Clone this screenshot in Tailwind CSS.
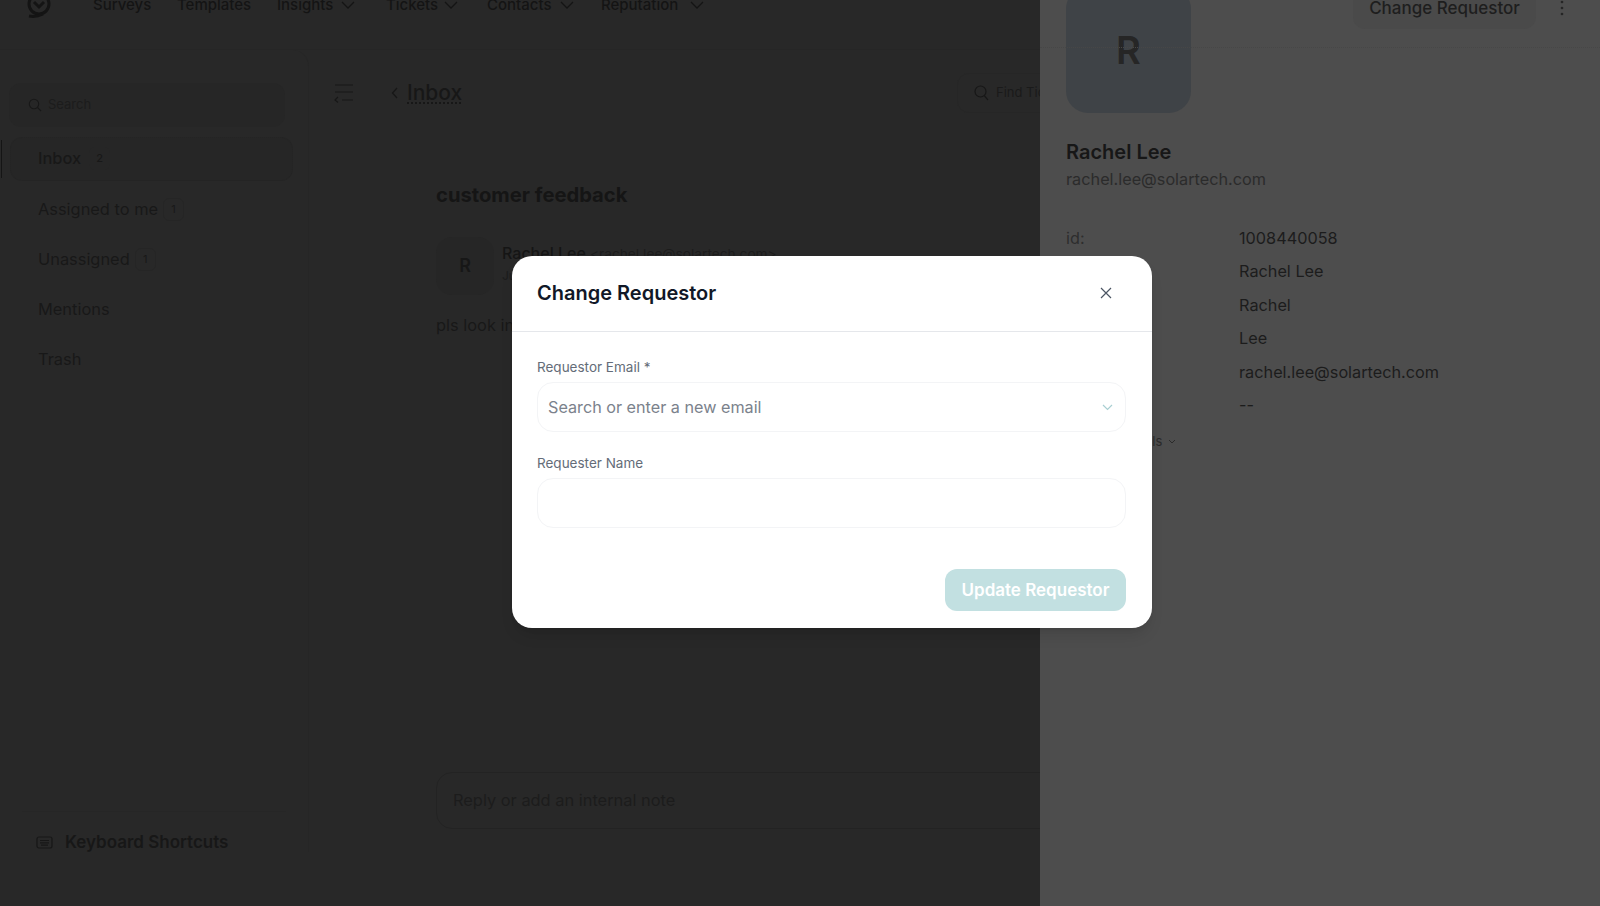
<!DOCTYPE html>
<html lang="en">
<head>
<meta charset="UTF-8" />
<meta name="viewport" content="width=device-width, initial-scale=1.0"/>
<title>Change Requestor</title>
<script src="https://cdn.jsdelivr.net/npm/@tailwindcss/browser@4"></script>
</head>
<body class="relative w-[1600px] h-[906px] overflow-hidden bg-[#282828] font-['Inter',sans-serif] text-[#171717]">

  <div class="flex h-full">
    <!-- Dimmed page -->
    <div class="w-[1040px] flex flex-col overflow-hidden">
      <!-- Navbar, scrolled partly out of view -->
      <nav class="h-[50px] shrink-0 flex items-start pl-[27px] border-b border-[#262626]">
        <svg class="-mt-[7px] mr-[42px]" width="24" height="25" viewBox="0 0 24 25" fill="none" stroke="#141414" stroke-width="3"><circle cx="12" cy="11" r="10"/><path d="M7 9l5 5 5-5M2 23c5 1 10 0 14-2" /></svg>
        <div class="flex text-[15px] font-medium leading-[14px] text-[#141414] -mt-[2px]">
          <span class="w-[84px]">Surveys</span>
          <span class="w-[100px]">Templates</span>
          <span class="w-[109px] flex items-center gap-[8px]">Insights <svg width="14" height="8" viewBox="0 0 14 8" fill="none" stroke="#141414" stroke-width="1.3"><path d="M1 1l6 6 6-6"/></svg></span>
          <span class="w-[101px] flex items-center gap-[6px]">Tickets <svg width="14" height="8" viewBox="0 0 14 8" fill="none" stroke="#141414" stroke-width="1.3"><path d="M1 1l6 6 6-6"/></svg></span>
          <span class="w-[114px] flex items-center gap-[8px]">Contacts <svg width="14" height="8" viewBox="0 0 14 8" fill="none" stroke="#141414" stroke-width="1.3"><path d="M1 1l6 6 6-6"/></svg></span>
          <span class="flex items-center gap-[12px]">Reputation <svg width="14" height="8" viewBox="0 0 14 8" fill="none" stroke="#141414" stroke-width="1.3"><path d="M1 1l6 6 6-6"/></svg></span>
        </div>
      </nav>

      <div class="flex flex-1 min-h-0">
        <!-- Sidebar -->
        <aside class="w-[309px] h-[802px] shrink-0 flex flex-col border-r border-[#262626] pt-[33px] rounded-tr-2xl">
          <div class="ml-[9px] w-[276px] h-11 rounded-xl bg-[#262626] flex items-center pl-[19px] gap-[6px] text-[13px] text-[#1c1c1c]">
            <svg width="14" height="14" viewBox="0 0 14 14" fill="none" stroke="#181818" stroke-width="1.1"><circle cx="6" cy="6" r="4.7"/><path d="M9.5 9.5L13 13"/></svg>
            Search
          </div>
          <ul class="mt-[10px] flex flex-col gap-[6px] text-[16.4px] text-[#181818]">
            <li class="relative h-11 ml-[10px] w-[283px] rounded-xl bg-[#262626] border border-dotted border-[#242424] flex items-center pl-[27px] pb-[2px] gap-2 font-medium">
              <span class="absolute -left-[10px] top-[2px] h-[38px] w-[1px] bg-[#151515]"></span>
              Inbox <span class="w-[21px] h-[23px] rounded-md bg-[#262626] flex items-center justify-center text-[11px]">2</span>
            </li>
            <li class="h-11 pl-[38px] flex items-center gap-[5px]">Assigned to me <span class="w-[21px] h-[23px] rounded-md border border-[#252525] flex items-center justify-center text-[11px]">1</span></li>
            <li class="h-11 pl-[38px] flex items-center gap-[5px]">Unassigned <span class="w-[21px] h-[23px] rounded-md border border-[#252525] flex items-center justify-center text-[11px]">1</span></li>
            <li class="h-11 pl-[38px] flex items-center">Mentions</li>
            <li class="h-11 pl-[38px] flex items-center">Trash</li>
          </ul>
          <div class="mt-auto mx-[22px] h-[41px] border-t border-[#262626] flex items-end pl-[14px] gap-3 font-semibold text-[17px] text-[#171717]">
            <svg class="mb-[3px]" width="17" height="13" viewBox="0 0 17 13" fill="none" stroke="#171717" stroke-width="1.2"><rect x="1" y="1" width="15" height="11" rx="2"/><path d="M4 4.5h9M4 6.8h9M5 9.2h7"/></svg>
            <span class="leading-[20px]">Keyboard Shortcuts</span>
          </div>
        </aside>

        <!-- Ticket -->
        <main class="flex-1 min-w-0 flex flex-col overflow-hidden">
          <div class="h-10 mt-[23px] flex items-center pl-[25px]">
            <svg width="20" height="19" viewBox="0 0 20 19" fill="none" stroke="#171717" stroke-width="1.2"><path d="M1 1h18M1 8h18M8 16h11M4 13l-3 3 3 2.5"/></svg>
            <svg class="ml-[37px]" width="8" height="12" viewBox="0 0 8 12" fill="none" stroke="#171717" stroke-width="1.3"><path d="M6 1L1.5 6 6 11"/></svg>
            <a class="ml-[8px] text-[21px] font-medium underline decoration-dotted underline-offset-2 text-[#171717]">Inbox</a>
            <div class="ml-auto w-[200px] shrink-0 h-10 rounded-xl border border-[#262626] flex items-center pl-[16px] gap-[7px] text-[13px] text-[#1a1a1a] -mr-[117px]">
              <svg width="15" height="16" viewBox="0 0 15 16" fill="none" stroke="#171717" stroke-width="1.2"><circle cx="6.5" cy="6.5" r="5.5"/><path d="M10.5 11l3.5 4"/></svg>
              Find Tickets
            </div>
          </div>
          <div class="pl-[127px] flex flex-col flex-1">
            <h2 class="mt-[70px] text-[20.2px] leading-6 font-bold text-[#151515] whitespace-nowrap">customer feedback</h2>
            <div class="mt-[30px] flex gap-2">
              <div class="w-[58px] h-[58px] rounded-2xl bg-[#262626] flex items-center justify-center text-[18px] font-semibold text-[#171717] pb-[2px]">R</div>
              <div class="whitespace-nowrap">
                <p class="leading-5 mt-[6px] text-[16px] font-medium text-[#151515]">Rachel Lee <span class="text-[13.7px] font-normal text-[#1c1c1c]">&lt;rachel.lee@solartech.com&gt;</span></p>
                <p class="text-xs mt-1 text-[#1c1c1c]">Jun 3</p>
              </div>
            </div>
            <p class="mt-[18px] text-[16.4px] text-[#181818] whitespace-nowrap">pls look into this</p>
            <div class="mt-[434px] w-[700px] shrink-0 h-[57px] rounded-2xl border border-[#232323] flex items-center pl-4 text-[16.4px] text-[#1c1c1c]">Reply or add an internal note</div>
          </div>
        </main>
      </div>
    </div>

    <!-- Requestor drawer -->
    <div class="flex-1 bg-[#4d4d4d] flex flex-col">
      <div class="h-[48px] shrink-0 relative border-b border-dotted border-[#474747]">
        <div class="absolute right-[64px] -top-[11px] w-[183px] h-[40px] rounded-xl bg-[#4a4a4a] flex items-center justify-center text-[17px] font-medium text-[#1e1e1e]">Change Requestor</div>
        <svg class="absolute right-[36px] top-0" width="4" height="16" viewBox="0 0 4 16" fill="#252525"><circle cx="2" cy="2" r="1.3"/><circle cx="2" cy="8" r="1.3"/><circle cx="2" cy="14" r="1.3"/></svg>
      </div>
      <div class="pl-[26px] -mt-[48px]">
        <div class="-mt-[13px] w-[125px] h-[126px] rounded-[22px] bg-[#3f4347] flex items-center justify-center text-[38px] font-semibold text-[#262626]">R</div>
        <h3 class="mt-[27px] text-[20px] leading-6 font-semibold text-[#171717]">Rachel Lee</h3>
        <p class="mt-[3px] text-[16.25px] leading-6 text-[#2b2b2b]">rachel.lee@solartech.com</p>
        <dl class="mt-[30px] grid grid-cols-[173px_1fr] auto-rows-[33.5px] items-center text-[16.25px] text-[#1c1c1c]">
          <dt class="text-[#2e2e2e]">id:</dt><dd>1008440058</dd>
          <dt class="text-[#2e2e2e]">name:</dt><dd>Rachel Lee</dd>
          <dt class="text-[#2e2e2e]">first name:</dt><dd>Rachel</dd>
          <dt class="text-[#2e2e2e]">last name:</dt><dd>Lee</dd>
          <dt class="text-[#2e2e2e]">email:</dt><dd>rachel.lee@solartech.com</dd>
          <dt class="text-[#2e2e2e]">phone:</dt><dd>--</dd>
        </dl>
        <div class="mt-[10px] ml-[5px] flex items-center gap-1 text-[13px] text-[#2b2b2b]">
          <span>View all details</span>
          <svg class="ml-[2px]" width="8" height="6" viewBox="0 0 8 6" fill="none" stroke="#2b2b2b" stroke-width="1"><path d="M1 1l3 3 3-3"/></svg>
        </div>
      </div>
    </div>
  </div>

  <!-- Modal -->
  <div class="absolute left-[512px] top-[256px] w-[640px] h-[372px] bg-white rounded-[20px] shadow-lg text-[#111827] flex flex-col">
    <div class="h-[76px] shrink-0 flex items-center justify-between pl-[25px] pr-[40px] pb-[2px] border-b border-gray-200">
      <h2 class="text-[20px] font-semibold">Change Requestor</h2>
      <svg width="12" height="12" viewBox="0 0 12 12" fill="none" stroke="#4b5563" stroke-width="1.2"><path d="M1 1l10 10M11 1L1 11"/></svg>
    </div>
    <div class="flex-1 pl-[25px] pr-[26px] flex flex-col">
      <label class="mt-[26px] text-[13.5px] leading-[18px] text-[#646c78]">Requestor Email *</label>
      <div class="mt-[6px] h-[50px] rounded-2xl border border-gray-100 flex items-center justify-between pl-[10px] pr-[12px] text-[16.2px] text-[#7b828c]">
        Search or enter a new email
        <svg width="11" height="7" viewBox="0 0 11 7" fill="none" stroke="#a9cfd2" stroke-width="1.2"><path d="M1 1l4.5 4.5L10 1"/></svg>
      </div>
      <label class="mt-[22px] text-[13.5px] leading-[18px] text-[#646c78]">Requester Name</label>
      <input class="mt-[6px] h-[50px] rounded-2xl border border-gray-100 px-3" type="text" />
      <button class="mt-[41px] self-end w-[181px] h-[42px] rounded-xl bg-[#c2e0e1] text-white text-[17px] font-semibold pt-[1px]">Update Requestor</button>
    </div>
  </div>

</body>
</html>
